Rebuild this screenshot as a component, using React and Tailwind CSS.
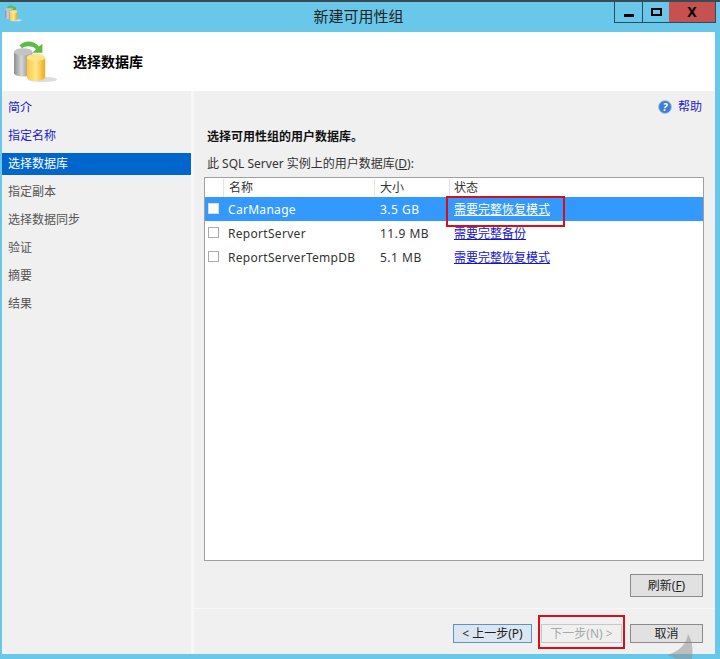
const font = { fontFamily: '"Noto Sans", "Noto Sans CJK SC", sans-serif' };

const navItems = [
  { label: "简介", link: true },
  { label: "指定名称", link: true },
  { label: "选择数据库", active: true },
  { label: "指定副本" },
  { label: "选择数据同步" },
  { label: "验证" },
  { label: "摘要" },
  { label: "结果" },
];

const rows = [
  { name: "CarManage", size: "3.5 GB", status: "需要完整恢复模式", selected: true },
  { name: "ReportServer", size: "11.9 MB", status: "需要完整备份" },
  { name: "ReportServerTempDB", size: "5.1 MB", status: "需要完整恢复模式" },
];

function DbIcon({ size = 48, id = "a" }) {
  return (
    <svg width={size} height={size} viewBox="0 0 48 48">
      <defs>
        <linearGradient id={`grey-${id}`} x1="0" x2="1" y1="0" y2="0">
          <stop offset="0" stopColor="#8e8e8e" />
          <stop offset="0.4" stopColor="#d6d6d6" />
          <stop offset="1" stopColor="#777" />
        </linearGradient>
        <linearGradient id={`gold-${id}`} x1="0" x2="1" y1="0" y2="0">
          <stop offset="0" stopColor="#fbc840" />
          <stop offset="0.5" stopColor="#ffe88a" />
          <stop offset="1" stopColor="#f0a818" />
        </linearGradient>
      </defs>
      <ellipse cx="31" cy="43" rx="16" ry="3" fill="#ddd" />
      <path d="M6 6 C11 0 22 0 27 7 L31 4 L31 14 L20 14 L24 10 C20 6 13 6 9 9 Z" fill="#5dbb46" />
      <path d="M0 13 V36 C0 41 20 41 20 36 V13 Z" fill={`url(#grey-${id})`} />
      <ellipse cx="10" cy="13" rx="10" ry="4" fill="#c4c4c4" />
      <path d="M14 19 V40 C14 46 34 46 34 40 V19 Z" fill={`url(#gold-${id})`} />
      <ellipse cx="24" cy="19" rx="10" ry="4" fill="#fce58a" />
    </svg>
  );
}

function HelpIcon() {
  return (
    <svg width="14" height="14" viewBox="0 0 14 14">
      <circle cx="7" cy="7" r="6.5" fill="#3f7fd0" stroke="#a9c8ee" />
      <text x="7" y="10.5" textAnchor="middle" fontSize="10" fontWeight="700" fontStyle="italic" fill="#fff">?</text>
    </svg>
  );
}

function Button({ children, className = "" }) {
  return (
    <div className={`flex items-center justify-center border border-[#8a8a8a] bg-[#e1e1e1] text-[12px] text-[#222] ${className}`}>
      {children}
    </div>
  );
}

export default function App() {
  return (
    <div style={font} className="relative flex h-[659px] w-[720px] flex-col overflow-hidden bg-[#69c8ea] pb-[5px] pl-[2px] pr-[5px]">
      {/* title bar */}
      <div className="h-[2px] bg-[#3a4a55] -ml-[2px] -mr-[5px] shrink-0" />
      <div className="relative flex h-[30px] shrink-0 items-center justify-center pb-[3px]">
        <div className="absolute left-[3px] top-[3px]">
          <DbIcon size={17} id="small" />
        </div>
        <span className="text-[15px] leading-[20px] text-[#222]">新建可用性组</span>
        <div className="absolute right-[-1px] top-0 flex h-[21px] border-x border-b border-[#2c4a5c]">
          <div className="flex w-[28px] items-end justify-center border-r border-[#2c4a5c] pb-[5px]">
            <div className="h-[3px] w-[10px] bg-black" />
          </div>
          <div className="flex w-[26px] items-center justify-center">
            <div className="h-[8px] w-[11px] border-2 border-black" />
          </div>
          <div className="flex w-[46px] items-center justify-center bg-[#c75050] text-[14px] font-bold leading-none text-black">
            X
          </div>
        </div>
      </div>

      {/* header */}
      <div className="flex h-[59px] shrink-0 items-center bg-white pl-[12px]">
        <DbIcon size={44} id="big" />
        <span className="ml-[15px] text-[14px] font-bold text-black">选择数据库</span>
      </div>

      <div className="flex min-h-0 flex-1 bg-[#f0f0f0]">
        {/* nav */}
        <div className="w-[189px] shrink-0 pt-[3px]">
          {navItems.map((item) => (
            <div key={item.label} className="flex h-[28px] items-center">
              <div
                className={`flex h-[22px] w-full items-center pl-[6px] text-[12px] ${
                  item.active ? "bg-[#0066cc] text-white" : item.link ? "text-[#1a1ad0]" : "text-[#555]"
                }`}
              >
                {item.label}
              </div>
            </div>
          ))}
        </div>
        <div className="w-[3px] shrink-0 bg-[#f7f7f7]" />

        {/* main */}
        <div className="flex min-w-0 flex-1 flex-col">
          <div className="flex h-[32px] items-center justify-end pb-[1px] pr-[13px]">
            <HelpIcon />
            <span className="ml-[6px] text-[12px] leading-[16px] text-[#1a1ad0]">帮助</span>
          </div>
          <div className="pl-[13px] pt-[6px] text-[12px] font-bold leading-[16px] text-[#111]">选择可用性组的用户数据库。</div>
          <div className="pl-[13px] pt-[11px] text-[12px] leading-[16px] text-[#333]">
            此 SQL Server 实例上的用户数据库(<span className="underline">D</span>):
          </div>

          {/* table */}
          <div className="ml-[10px] mr-[11px] mt-[5px] h-[384px] border border-[#a0a0a0] bg-white pt-[1px]">
            <div className="flex h-[18px] text-[12px] leading-[17px] text-[#333]">
              <div className="w-[19px] border-r border-[#e5e5e5]" />
              <div className="w-[151px] border-r border-[#e5e5e5] pl-[5px]">名称</div>
              <div className="w-[75px] border-r border-[#e5e5e5] pl-[5px]">大小</div>
              <div className="pl-[4px]">状态</div>
            </div>
            {rows.map((row) => (
              <div
                key={row.name}
                className={`flex h-[24px] items-center pt-[1px] text-[12px] ${row.selected ? "bg-[#3399ff] text-white" : "text-[#333]"}`}
              >
                <div className="flex w-[20px] justify-start pl-[3px]">
                  <div className={`-mt-[3px] h-[11px] w-[11px] border ${row.selected ? "border-[#ddd] bg-white" : "border-[#aaa] bg-white"}`} />
                </div>
                <div className="w-[151px] pl-[3px] tracking-[0.3px]">{row.name}</div>
                <div className="w-[75px] pl-[4px] tracking-[0.5px]">{row.size}</div>
                <div className={`pl-[3px] underline ${row.selected ? "text-white" : "text-[#1414c8]"}`}>{row.status}</div>
              </div>
            ))}
          </div>

          <div className="mr-[12px] mt-[13px] flex justify-end">
            <Button className="h-[23px] w-[73px]">刷新(<span className="underline">F</span>)</Button>
          </div>
          <div className="mt-[11px] border-t border-[#f6f6f6]" />
          <div className="mr-[12px] mt-[15px] flex justify-end">
            <Button className="mr-[9px] h-[19px] w-[79px] pt-[1px] !border-[#5a93c4] !bg-[#dbe6f0]">&lt; 上一步(P)</Button>
            <Button className="mr-[8px] h-[19px] w-[81px] pt-[1px] !border-[#c8c8c8] !bg-[#f0f0f0] !text-[#a8a8a8]">下一步(N) &gt;</Button>
            <Button className="h-[19px] w-[73px] pt-[1px]">取消</Button>
          </div>
        </div>
      </div>

      {/* watermark */}
      <svg className="absolute left-[662px] top-[634px]" width="40" height="25" viewBox="0 0 40 25">
        <path d="M26 0 C25 9 18 17 6 21 L14 25 L30 25 C31 16 31 8 26 0 Z" fill="#8c8c8c" fillOpacity="0.5" />
      </svg>

      {/* red annotation boxes */}
      <div className="absolute left-[446px] top-[196px] h-[31px] w-[119px] border-2 border-[#d80f1a]" />
      <div className="absolute left-[538px] top-[615px] h-[34px] w-[87px] border-2 border-[#d80f1a]" />
    </div>
  );
}
